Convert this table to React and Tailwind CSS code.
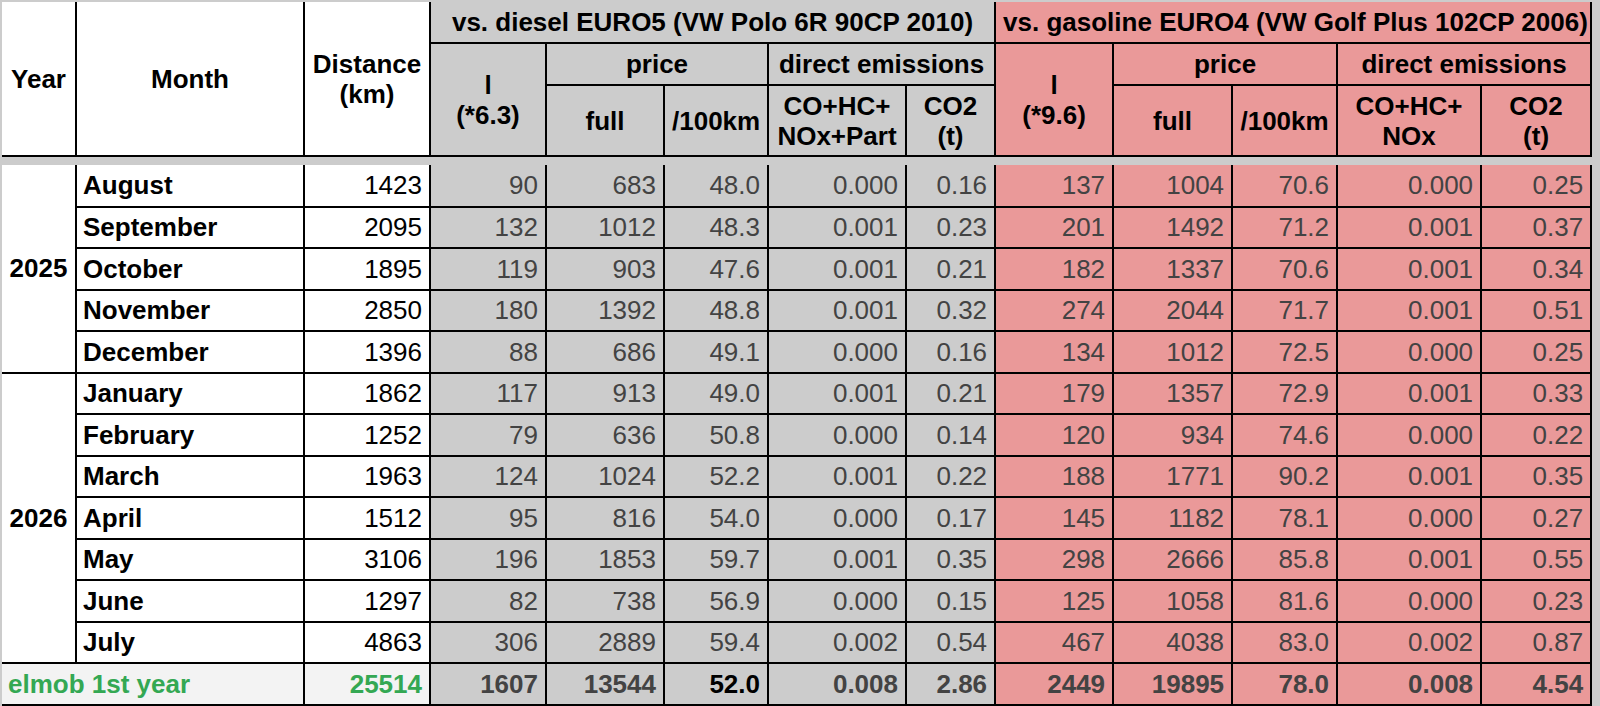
import React from 'react';

const rows = [
  { m: 'August', d: '1423', a: ['90', '683', '48.0', '0.000', '0.16'], b: ['137', '1004', '70.6', '0.000', '0.25'] },
  { m: 'September', d: '2095', a: ['132', '1012', '48.3', '0.001', '0.23'], b: ['201', '1492', '71.2', '0.001', '0.37'] },
  { m: 'October', d: '1895', a: ['119', '903', '47.6', '0.001', '0.21'], b: ['182', '1337', '70.6', '0.001', '0.34'] },
  { m: 'November', d: '2850', a: ['180', '1392', '48.8', '0.001', '0.32'], b: ['274', '2044', '71.7', '0.001', '0.51'] },
  { m: 'December', d: '1396', a: ['88', '686', '49.1', '0.000', '0.16'], b: ['134', '1012', '72.5', '0.000', '0.25'] },
  { m: 'January', d: '1862', a: ['117', '913', '49.0', '0.001', '0.21'], b: ['179', '1357', '72.9', '0.001', '0.33'] },
  { m: 'February', d: '1252', a: ['79', '636', '50.8', '0.000', '0.14'], b: ['120', '934', '74.6', '0.000', '0.22'] },
  { m: 'March', d: '1963', a: ['124', '1024', '52.2', '0.001', '0.22'], b: ['188', '1771', '90.2', '0.001', '0.35'] },
  { m: 'April', d: '1512', a: ['95', '816', '54.0', '0.000', '0.17'], b: ['145', '1182', '78.1', '0.000', '0.27'] },
  { m: 'May', d: '3106', a: ['196', '1853', '59.7', '0.001', '0.35'], b: ['298', '2666', '85.8', '0.001', '0.55'] },
  { m: 'June', d: '1297', a: ['82', '738', '56.9', '0.000', '0.15'], b: ['125', '1058', '81.6', '0.000', '0.23'] },
  { m: 'July', d: '4863', a: ['306', '2889', '59.4', '0.002', '0.54'], b: ['467', '4038', '83.0', '0.002', '0.87'] },
];

const widths = [74, 228, 126, 116, 118, 104, 138, 89, 118, 119, 105, 144, 110];

const cell = 'border-2 border-black px-[7px] py-0 align-middle';
const gray = 'bg-[#cccccc]';
const red = 'bg-[#ea9999]';

export default function App() {
  return (
    <div className="h-[706px] w-[1600px] overflow-hidden bg-[#cccccc] pl-[2px] pt-[2px] font-['Liberation_Sans',Arial,sans-serif] text-[26px] leading-[30px] text-black">
      <table className="table-fixed border-collapse" style={{ width: 1589 }}>
        <colgroup>
          {widths.map((w, i) => (
            <col key={i} style={{ width: w }} />
          ))}
        </colgroup>
        <thead className="font-bold">
          <tr className="h-[41px]">
            <th rowSpan={3} className={`${cell} border-t-0 border-l-0 bg-white text-center`}>Year</th>
            <th rowSpan={3} className={`${cell} border-t-0 bg-white text-center`}>Month</th>
            <th rowSpan={3} className={`${cell} border-t-0 bg-white text-center`}>
              Distance
              <br />
              (km)
            </th>
            <th colSpan={5} className={`${cell} border-t-0 ${gray} whitespace-nowrap px-0 text-center`}>
              vs. diesel EURO5 (VW Polo 6R 90CP 2010)
            </th>
            <th colSpan={5} className={`${cell} border-t-0 ${red} whitespace-nowrap px-0 text-center`}>
              vs. gasoline EURO4 (VW Golf Plus 102CP 2006)
            </th>
          </tr>
          <tr className="h-[42px]">
            <th rowSpan={2} className={`${cell} ${gray} text-center`}>
              l
              <br />
              (*6.3)
            </th>
            <th colSpan={2} className={`${cell} ${gray} text-center`}>price</th>
            <th colSpan={2} className={`${cell} ${gray} whitespace-nowrap text-center`}>direct emissions</th>
            <th rowSpan={2} className={`${cell} ${red} text-center`}>
              l
              <br />
              (*9.6)
            </th>
            <th colSpan={2} className={`${cell} ${red} text-center`}>price</th>
            <th colSpan={2} className={`${cell} ${red} whitespace-nowrap text-center`}>direct emissions</th>
          </tr>
          <tr className="h-[71px]">
            <th className={`${cell} ${gray} text-center`}>full</th>
            <th className={`${cell} ${gray} px-0 text-center`}>/100km</th>
            <th className={`${cell} ${gray} px-0 text-center`}>
              CO+HC+
              <br />
              NOx+Part
            </th>
            <th className={`${cell} ${gray} px-0 text-center`}>
              CO2
              <br />
              (t)
            </th>
            <th className={`${cell} ${red} text-center`}>full</th>
            <th className={`${cell} ${red} px-0 text-center`}>/100km</th>
            <th className={`${cell} ${red} px-0 text-center`}>
              CO+HC+
              <br />
              NOx
            </th>
            <th className={`${cell} ${red} px-0 text-center`}>
              CO2
              <br />
              (t)
            </th>
          </tr>
        </thead>
        <tbody>
          <tr className="h-[9px]">
            <td colSpan={13} className="bg-[#cccccc] p-0" />
          </tr>
          {rows.map((r, i) => (
            <tr key={r.m} className="h-[41.5px]">
              {i === 0 && (
                <td rowSpan={5} className={`${cell} border-t-0 border-l-0 bg-white text-center font-bold`}>2025</td>
              )}
              {i === 5 && (
                <td rowSpan={7} className={`${cell} border-l-0 bg-white text-center font-bold`}>2026</td>
              )}
              <td className={`${cell} ${i === 0 ? 'border-t-0' : ''} bg-white pl-[6px] text-left font-bold`}>{r.m}</td>
              <td className={`${cell} ${i === 0 ? 'border-t-0' : ''} bg-white text-right`}>{r.d}</td>
              {r.a.map((v, j) => (
                <td key={'a' + j} className={`${cell} ${i === 0 ? 'border-t-0' : ''} ${gray} text-right text-[#434343]`}>{v}</td>
              ))}
              {r.b.map((v, j) => (
                <td key={'b' + j} className={`${cell} ${i === 0 ? 'border-t-0' : ''} ${red} text-right text-[#434343]`}>{v}</td>
              ))}
            </tr>
          ))}
          <tr className="h-[41.5px] font-bold">
            <td colSpan={2} className={`${cell} border-l-0 bg-[#f3f3f3] pl-[6px] text-left text-[#34a853]`}>elmob 1st year</td>
            <td className={`${cell} bg-[#f3f3f3] text-right text-[#34a853]`}>25514</td>
            <td className={`${cell} ${gray} text-right text-[#434343]`}>1607</td>
            <td className={`${cell} ${gray} text-right text-[#434343]`}>13544</td>
            <td className={`${cell} ${gray} text-right text-black`}>52.0</td>
            <td className={`${cell} ${gray} text-right text-[#434343]`}>0.008</td>
            <td className={`${cell} ${gray} text-right text-[#434343]`}>2.86</td>
            <td className={`${cell} ${red} text-right text-[#434343]`}>2449</td>
            <td className={`${cell} ${red} text-right text-[#434343]`}>19895</td>
            <td className={`${cell} ${red} text-right text-[#434343]`}>78.0</td>
            <td className={`${cell} ${red} text-right text-[#434343]`}>0.008</td>
            <td className={`${cell} ${red} text-right text-[#434343]`}>4.54</td>
          </tr>
        </tbody>
      </table>
    </div>
  );
}
